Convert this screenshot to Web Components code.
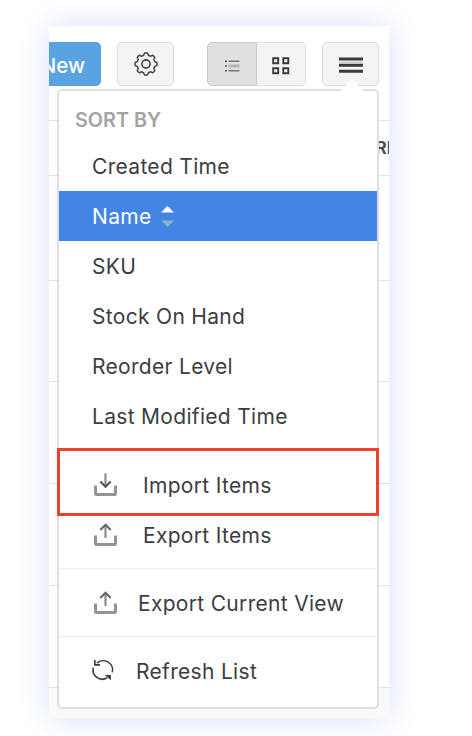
<!DOCTYPE html>
<html lang="en">
<head>
<meta charset="utf-8">
<title>Items</title>
<style>
	body {
		margin: 0;
		background: #fff;
		font-family: Inter, "Liberation Sans", sans-serif;
		color: #3c3d42;
	}
</style>
</head>
<body>
<items-panel>
	<tool-bar slot="toolbar">
		<tool-button kind="primary">New</tool-button>
		<tool-button kind="gear"><ui-icon name="gear"></ui-icon></tool-button>
		<tool-switch>
			<ui-icon slot="on" name="list"></ui-icon>
			<ui-icon slot="off" name="grid"></ui-icon>
		</tool-switch>
		<tool-button kind="more"><ui-icon name="bars"></ui-icon></tool-button>
	</tool-bar>
	<items-table slot="table">RE</items-table>
	<drop-menu slot="menu">
		<menu-heading>SORT BY</menu-heading>
		<menu-item>Created Time</menu-item>
		<menu-item active>Name<ui-icon slot="end" name="sort"></ui-icon></menu-item>
		<menu-item>SKU</menu-item>
		<menu-item>Stock On Hand</menu-item>
		<menu-item>Reorder Level</menu-item>
		<menu-item>Last Modified Time</menu-item>
		<menu-divider></menu-divider>
		<menu-item marked><ui-icon slot="icon" name="import"></ui-icon>Import Items</menu-item>
		<menu-item><ui-icon slot="icon" name="export"></ui-icon>Export Items</menu-item>
		<menu-divider></menu-divider>
		<menu-item style="--icon-col: 46px"><ui-icon slot="icon" name="export"></ui-icon>Export Current View</menu-item>
		<menu-divider></menu-divider>
		<menu-item style="--icon-col: 44px"><ui-icon slot="icon" name="refresh"></ui-icon>Refresh List</menu-item>
	</drop-menu>
</items-panel>

<script>
const define = (name, html, ready) => {
	const template = document.createElement('template');
	template.innerHTML = html;
	customElements.define(name, class extends HTMLElement {
		constructor() {
			super();
			this.attachShadow({mode: 'open'}).appendChild(template.content.cloneNode(true));
		}

		connectedCallback() {
			if (ready) ready(this);
		}
	});
};

// Toothed outline for the settings icon, as a closed smooth path.
const gearPath = () => {
	const points = [];
	for (let i = 0; i < 96; i++) {
		const a = i / 96 * Math.PI * 2;
		const wave = Math.max(-1, Math.min(1, Math.cos(a * 8) * 1.7));
		const r = 10 + wave * 1.05;
		points.push(`${(12 + r * Math.sin(a)).toFixed(2)} ${(12 - r * Math.cos(a)).toFixed(2)}`);
	}
	return `M${points.join('L')}Z`;
};

const tray = '<path d="M3.5 12.5v7.7q0 1.3 1.3 1.3h17.4q1.3 0 1.3-1.3V12.5" stroke="#949494" stroke-width="3"/>';

const icons = {
	gear: [24, 24, `<path d="${gearPath()}" stroke="#444" stroke-width="1.5"/><circle cx="12" cy="12" r="4.1" stroke="#444" stroke-width="1.6"/>`],
	list: [15, 12, '<path d="M0 1.2h2M0 6h2M0 10.7h2" stroke="#555" stroke-width="1.5"/><path d="M3.5 1.2H14.5M3.5 10.7H14.5" stroke="#777" stroke-width="1.4"/><path d="M3.5 6H14.5" stroke="#b4b4b8" stroke-width="3"/>'],
	grid: [18, 18, '<path d="M1.2 1.2h5v5h-5zM11.3 1.2h5v5h-5zM1.2 11.3h5v5h-5zM11.3 11.3h5v5h-5z" stroke="#38393d" stroke-width="1.9"/>'],
	bars: [24, 16, '<path d="M0 2h24M0 8.3h24M0 14.3h24" stroke="#39393e" stroke-width="3"/><path d="M0 5.2h24" stroke="#c9c9cf" stroke-width="1.2"/>'],
	sort: [13, 21, '<path d="M0 6.5L6.5 0L13 6.5Z" fill="#fff"/><path d="M0 14.5L6.5 21L13 14.5Z" fill="#8fb0c4"/>'],
	import: [26, 23, `${tray}<path d="M13.5 .3v12.5" stroke="#8b8b8b" stroke-width="2.2"/><path d="M8.3 8.5L13.5 13.8L18.7 8.5" stroke="#55565a" stroke-width="2.2"/>`],
	export: [26, 23, `${tray}<path d="M13.5 15V2.5" stroke="#8b8b8b" stroke-width="2.2"/><path d="M8.3 7L13.5 1.7L18.7 7" stroke="#66676b" stroke-width="2"/>`],
	refresh: [22, 22, '<path d="M5 4.2A9.3 9.3 0 0 1 20.3 13.4M1.3 8.6A9.3 9.3 0 0 0 15.2 18.8" stroke="#3c3d42" stroke-width="1.6"/><path d="M2.8 .9V5.8H8" stroke="#3c3d42" stroke-width="1.7"/><path d="M12.8 16H18.9V21.2Z" fill="#3c3d42"/>']
};

define('ui-icon', `
	<style>
		:host { display: inline-block; flex: none; line-height: 0; }
		svg { display: block; fill: none; overflow: visible; }
	</style>
	<div></div>
`, el => {
	const [w, h, body] = icons[el.getAttribute('name')];
	el.shadowRoot.querySelector('div').innerHTML = `<svg width="${w}" height="${h}" viewBox="0 0 ${w} ${h}">${body}</svg>`;
});

define('items-panel', `
	<style>
		:host {
			display: block;
			height: 736px;
			padding: 26px 83px 18px 49px;
			box-sizing: border-box;
			overflow: hidden;
		}
		#card {
			position: relative;
			height: 692px;
			display: flex;
			flex-direction: column;
			background: #fff;
			box-shadow: 0 0 32px #d6e0f9;
		}
		#menu { position: absolute; left: 8px; top: 63px; }
	</style>
	<div id="card">
		<slot name="toolbar"></slot>
		<slot name="table"></slot>
		<div id="menu"><slot name="menu"></slot></div>
	</div>
`);

define('tool-bar', `
	<style>
		:host {
			display: flex;
			height: 94px;
			padding: 16px 10px 0 0;
			box-sizing: border-box;
			justify-content: flex-end;
			overflow: hidden;
		}
	</style>
	<slot></slot>
`);

define('tool-button', `
	<style>
		:host {
			display: flex;
			flex: none;
			align-items: center;
			justify-content: center;
			width: 57px;
			height: 44px;
			box-sizing: border-box;
			border: 1px solid #dcdcdc;
			border-radius: 5px;
			background: #f4f4f4;
			font-size: 19px;
		}
		:host([kind="primary"]) {
			width: 90px;
			justify-content: flex-end;
			padding: 2px 15px 0 0;
			margin-right: 16px;
			border-color: #569fdd;
			background: #5aa3e2;
			color: #fff;
			font-weight: 500;
			font-size: 20.5px;
		}
		:host([kind="gear"]) { margin-right: 33px; }
		:host([kind="more"]) { margin-left: 16px; padding-top: 2px; }
	</style>
	<slot></slot>
`);

define('tool-switch', `
	<style>
		:host {
			display: grid;
			grid-template-columns: 50px 49px;
			flex: none;
			height: 44px;
			box-sizing: border-box;
		}
		div {
			display: grid;
			place-items: center;
			background: #f4f4f4;
			border: 1px solid #dcdcdc;
			border-left: 0;
			border-radius: 0 5px 5px 0;
		}
		#on {
			background: #e0e0e0;
			border: 1px solid #c9c9c9;
			border-radius: 5px 0 0 5px;
			padding-top: 4px;
		}
		#off { padding-top: 4px; }
	</style>
	<div id="on"><slot name="on"></slot></div>
	<div id="off"><slot name="off"></slot></div>
`);

define('items-table', `
	<style>
		:host {
			display: grid;
			grid-template-rows: 55px 105px 101px 102px 102px 102px 31px;
			overflow: hidden;
			font-size: 17px;
			font-weight: 700;
			color: #4c4e56;
		}
		div { border-top: 1px solid #e2e2e4; }
		#head {
			display: flex;
			align-items: center;
			justify-content: flex-end;
			white-space: nowrap;
			overflow: hidden;
		}
		#head span { margin-right: -8px; }
		#foot { background: #f9f9f9; }
	</style>
	<div id="head"><span><slot></slot></span></div>
	<div></div><div></div><div></div><div></div><div></div>
	<div id="foot"></div>
`);

define('drop-menu', `
	<style>
		:host {
			display: flex;
			flex-direction: column;
			position: relative;
			width: 322px;
			height: 620px;
			box-sizing: border-box;
			padding-top: 9px;
			border: 2px solid #dfdfdf;
			border-radius: 5px;
			background: #fff;
		}
		#arrow {
			position: absolute;
			right: 13px;
			top: -11px;
			width: 24px;
			height: 12px;
			background: #fff;
			clip-path: polygon(0 100%, 43% 8%, 50% 0, 57% 8%, 100% 100%);
		}
	</style>
	<div id="arrow"></div>
	<slot></slot>
`);

define('menu-heading', `
	<style>
		:host {
			display: flex;
			align-items: center;
			height: 41px;
			box-sizing: border-box;
			padding: 0 0 1px 16px;
			font-size: 19.8px;
			font-weight: 600;
			color: #a3a3a3;
		}
	</style>
	<slot></slot>
`);

define('menu-divider', `
	<style>
		:host { display: block; height: 1px; margin: 8px 0 9px; background: #ececec; }
		:host(:first-of-type) { margin: 9px 0; }
	</style>
`);

define('menu-item', `
	<style>
		:host {
			display: flex;
			align-items: center;
			position: relative;
			height: 50px;
			box-sizing: border-box;
			padding: 1px 0 0 33px;
			font-size: 21px;
			letter-spacing: .31px;
			white-space: nowrap;
		}
		:host([active]) { background: #4285e4; color: #fff; }
		:host([marked])::before {
			content: '';
			position: absolute;
			inset: -12px -2px -6px;
			border: 3px solid #f0412a;
		}
		#icon { flex: none; width: var(--icon-col, 51px); padding-top: 2px; }
		#end { display: flex; margin-left: 9px; }
	</style>
	<div id="icon"><slot name="icon"></slot></div>
	<slot></slot>
	<div id="end"><slot name="end"></slot></div>
`, el => {
	if (!el.querySelector('[slot="icon"]')) el.shadowRoot.getElementById('icon').remove();
});
</script>
</body>
</html>
